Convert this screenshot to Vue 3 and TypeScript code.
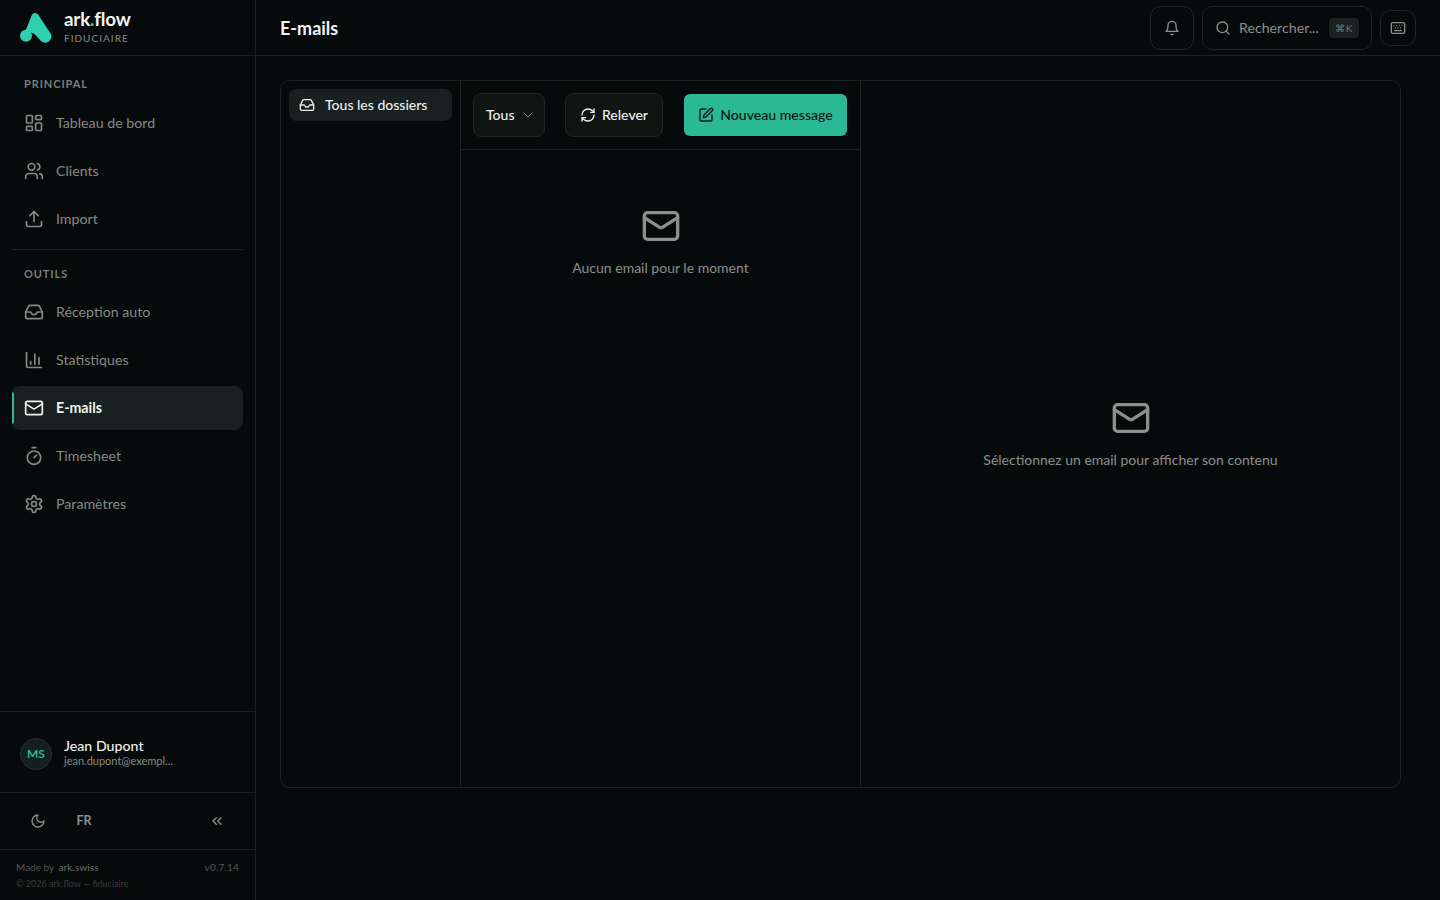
<script setup lang="ts">
import { h } from 'vue'

const circle = (x: number, y: number, r: number) =>
  `M${x - r} ${y}a${r} ${r} 0 1 0 ${2 * r} 0a${r} ${r} 0 1 0 ${-2 * r} 0z`
const rect = (x: number, y: number, w: number, he: number, r: number) =>
  `M${x + r} ${y}h${w - 2 * r}a${r} ${r} 0 0 1 ${r} ${r}v${he - 2 * r}a${r} ${r} 0 0 1 ${-r} ${r}h${-(w - 2 * r)}a${r} ${r} 0 0 1 ${-r} ${-r}v${-(he - 2 * r)}a${r} ${r} 0 0 1 ${r} ${-r}z`

const icons: Record<string, string[]> = {
  dashboard: [rect(3, 3, 7, 9, 1), rect(14, 3, 7, 5, 1), rect(14, 12, 7, 9, 1), rect(3, 16, 7, 5, 1)],
  users: ['M16 21v-2a4 4 0 0 0-4-4H6a4 4 0 0 0-4 4v2', circle(9, 7, 4), 'M22 21v-2a4 4 0 0 0-3-3.87', 'M16 3.13a4 4 0 0 1 0 7.75'],
  upload: ['M21 15v4a2 2 0 0 1-2 2H5a2 2 0 0 1-2-2v-4', 'm17 8-5-5-5 5', 'M12 3v12'],
  inbox: ['M22 12h-6l-2 3h-4l-2-3H2', 'M5.45 5.11 2 12v6a2 2 0 0 0 2 2h16a2 2 0 0 0 2-2v-6l-3.45-6.89A2 2 0 0 0 16.76 4H7.24a2 2 0 0 0-1.79 1.11z'],
  chart: ['M3 3v16a2 2 0 0 0 2 2h16', 'M8 17v-3', 'M13 17V5', 'M18 17V9'],
  mail: [rect(2, 4, 20, 16, 2), 'm22 7-8.97 5.7a1.94 1.94 0 0 1-2.06 0L2 7'],
  timer: ['M10 2h4', 'm12 14 3-3', circle(12, 14, 8)],
  settings: ['M12.22 2h-.44a2 2 0 0 0-2 2v.18a2 2 0 0 1-1 1.73l-.43.25a2 2 0 0 1-2 0l-.15-.08a2 2 0 0 0-2.73.73l-.22.38a2 2 0 0 0 .73 2.73l.15.1a2 2 0 0 1 1 1.72v.51a2 2 0 0 1-1 1.74l-.15.09a2 2 0 0 0-.73 2.73l.22.38a2 2 0 0 0 2.73.73l.15-.08a2 2 0 0 1 2 0l.43.25a2 2 0 0 1 1 1.73V20a2 2 0 0 0 2 2h.44a2 2 0 0 0 2-2v-.18a2 2 0 0 1 1-1.73l.43-.25a2 2 0 0 1 2 0l.15.08a2 2 0 0 0 2.73-.73l.22-.39a2 2 0 0 0-.73-2.73l-.15-.08a2 2 0 0 1-1-1.74v-.5a2 2 0 0 1 1-1.74l.15-.09a2 2 0 0 0 .73-2.73l-.22-.38a2 2 0 0 0-2.73-.73l-.15.08a2 2 0 0 1-2 0l-.43-.25a2 2 0 0 1-1-1.73V4a2 2 0 0 0-2-2z', circle(12, 12, 3)],
  moon: ['M12 3a6 6 0 0 0 9 9 9 9 0 1 1-9-9Z'],
  chevrons: ['m11 17-5-5 5-5', 'm18 17-5-5 5-5'],
  bell: ['M6 8a6 6 0 0 1 12 0c0 7 3 9 3 9H3s3-2 3-9', 'M10.3 21a1.94 1.94 0 0 0 3.4 0'],
  search: [circle(11, 11, 8), 'm21 21-4.3-4.3'],
  keyboard: ['M10 8h.01', 'M12 12h.01', 'M14 8h.01', 'M16 12h.01', 'M18 8h.01', 'M6 8h.01', 'M7 16h10', 'M8 12h.01', rect(2, 4, 20, 16, 2)],
  refresh: ['M3 12a9 9 0 0 1 9-9 9.75 9.75 0 0 1 6.74 2.74L21 8', 'M21 3v5h-5', 'M21 12a9 9 0 0 1-9 9 9.75 9.75 0 0 1-6.74-2.74L3 16', 'M8 16H3v5'],
  pen: ['M12 3H5a2 2 0 0 0-2 2v14a2 2 0 0 0 2 2h14a2 2 0 0 0 2-2v-7', 'M18.375 2.625a1 1 0 0 1 3 3l-9.013 9.014a2 2 0 0 1-.853.505l-2.873.84a.5.5 0 0 1-.62-.62l.84-2.873a2 2 0 0 1 .506-.852z'],
  chevron: ['m6 9 6 6 6-6'],
}

const Icon = (props: { name: string; size?: number; sw?: number }) =>
  h(
    'svg',
    {
      width: props.size ?? 20,
      height: props.size ?? 20,
      viewBox: '0 0 24 24',
      fill: 'none',
      stroke: 'currentColor',
      'stroke-width': props.sw ?? 2,
      'stroke-linecap': 'round',
      'stroke-linejoin': 'round',
      style: 'flex:none;display:block',
    },
    icons[props.name].map((d) => h('path', { d })),
  )
Icon.props = ['name', 'size', 'sw']

const mainNav = [
  { label: 'Tableau de bord', icon: 'dashboard' },
  { label: 'Clients', icon: 'users' },
  { label: 'Import', icon: 'upload' },
]
const toolNav = [
  { label: 'Réception auto', icon: 'inbox', active: false },
  { label: 'Statistiques', icon: 'chart', active: false },
  { label: 'E-mails', icon: 'mail', active: true },
  { label: 'Timesheet', icon: 'timer', active: false },
  { label: 'Paramètres', icon: 'settings', active: false },
]
</script>

<template>
  <div class="app">
    <aside class="sidebar">
      <div class="brand">
        <svg class="logo" width="32" height="30" viewBox="0 0 32 30">
          <path d="M12 1.8C13.4-.5 16.7-.5 18.2 1.8L30.8 20.8A6.2 6.2 0 0 1 21 28L14.5 21C13 19.6 10 19.5 8 19L5.5 17.5z" fill="#2fd0b0"/>
          <circle cx="6" cy="22.8" r="6" fill="#2fd0b0"/>
        </svg>
        <div class="brand-text">
          <div class="brand-name">ark<span class="dot">.</span>flow</div>
          <div class="brand-sub">FIDUCIAIRE</div>
        </div>
      </div>

      <nav class="nav">
        <div class="nav-label">PRINCIPAL</div>
        <div class="nav-list">
          <a v-for="item in mainNav" :key="item.label" class="nav-item">
            <Icon :name="item.icon" />
            <span class="t">{{ item.label }}</span>
          </a>
        </div>
        <div class="nav-sep"></div>
        <div class="nav-label second">OUTILS</div>
        <div class="nav-list">
          <a v-for="item in toolNav" :key="item.label" class="nav-item" :class="{ active: item.active }">
            <Icon :name="item.icon" />
            <span class="t">{{ item.label }}</span>
          </a>
        </div>
      </nav>

      <div class="user">
        <div class="avatar"><span class="t">MS</span></div>
        <div>
          <div class="user-name">Jean Dupont</div>
          <div class="user-mail">jean.dupont@exempl...</div>
        </div>
      </div>

      <div class="controls">
        <div class="controls-left">
          <button class="ctl"><Icon name="moon" :size="16" /></button>
          <button class="ctl lang"><span class="t">FR</span></button>
        </div>
        <button class="ctl"><Icon name="chevrons" :size="16" /></button>
      </div>

      <div class="foot">
        <div class="foot-row">
          <span>Made by <b>ark.swiss</b></span>
          <span class="version">v0.7.14</span>
        </div>
        <div class="copy">© 2026 ark.flow — fiduciaire</div>
      </div>
    </aside>

    <div class="content">
      <header class="topbar">
        <h1>E-mails</h1>
        <div class="top-actions">
          <button class="top-btn bell"><Icon name="bell" :size="16" /></button>
          <div class="search">
            <Icon name="search" :size="16" />
            <span class="search-text">Rechercher...</span>
            <kbd>⌘K</kbd>
          </div>
          <button class="top-btn kb"><Icon name="keyboard" :size="16" /></button>
        </div>
      </header>

      <main class="main">
        <section class="panel">
          <div class="folders">
            <div class="folder">
              <Icon name="inbox" :size="16" />
              <span class="t">Tous les dossiers</span>
            </div>
          </div>
          <div class="list">
            <div class="toolbar">
              <button class="tool select"><span class="t">Tous</span><span class="chev"><Icon name="chevron" :size="16" :sw="1.5" /></span></button>
              <button class="tool refresh"><Icon name="refresh" :size="16" /><span class="t">Relever</span></button>
              <button class="primary"><Icon name="pen" :size="16" /><span class="t">Nouveau message</span></button>
            </div>
            <div class="list-empty">
              <Icon name="mail" :size="40" />
              <p>Aucun email pour le moment</p>
            </div>
          </div>
          <div class="detail">
            <Icon name="mail" :size="40" />
            <p>Sélectionnez un email pour afficher son contenu</p>
          </div>
        </section>
      </main>
    </div>
  </div>
</template>

<style>
html, body { margin: 0; background: #070a0a; }
</style>

<style scoped>
.app {
  display: flex;
  height: 900px;
  overflow: hidden;
  background: #070a0a;
  color: #8b8f8e;
  font-family: "Lato", "Noto Sans", sans-serif;
  font-size: 14px;
}
button { font-family: inherit; cursor: pointer; }
.t { padding-bottom: 2px; }

.sidebar {
  width: 255px;
  flex: none;
  border-right: 1px solid #1d2321;
  display: flex;
  flex-direction: column;
}
.brand {
  height: 55px;
  flex: none;
  border-bottom: 1px solid #1d2321;
  display: flex;
  align-items: center;
  gap: 12px;
  padding-left: 20px;
}
.logo { flex: none; margin-top: 1px; }
.brand-text { padding-bottom: 2px; }
.brand-name { color: #f2f4f3; font-size: 18.8px; font-weight: 700; line-height: 20px; letter-spacing: -0.2px; }
.dot { color: #2fd0b0; }
.brand-sub { color: #7d8280; font-size: 10px; letter-spacing: 1px; line-height: 14px; margin-top: 2px; font-weight: 500; }

.nav { flex: 1; padding: 20px 12px 0; min-height: 0; }
.nav-label { color: #787d7b; font-size: 11px; font-weight: 700; letter-spacing: 0.9px; line-height: 16px; padding-left: 12px; margin-bottom: 9px; }
.nav-label.second { margin-bottom: 8px; }
.nav-list { display: flex; flex-direction: column; gap: 4px; }
.nav-item {
  position: relative;
  height: 44px;
  display: flex;
  align-items: center;
  gap: 12px;
  padding-left: 12px;
  border-radius: 8px;
  color: #858a88;
  font-size: 14.2px;
  box-sizing: border-box;
}
.nav-item.active {
  background: #18211f;
  color: #f2f4f3;
  font-weight: 700;
}
.nav-item.active::before {
  content: "";
  position: absolute;
  left: 0;
  top: 6px;
  bottom: 6px;
  width: 2px;
  background: #2bb894;
  border-radius: 0 2px 2px 0;
}
.nav-sep { height: 1px; background: #1d2321; margin: 8px 0 16px; }

.user {
  height: 80px;
  flex: none;
  border-top: 1px solid #1d2321;
  display: flex;
  align-items: center;
  gap: 12px;
  padding-left: 20px;
}
.avatar {
  width: 30px;
  height: 30px;
  margin-top: 4px;
  border-radius: 50%;
  background: #14201d;
  border: 1px solid #25332f;
  color: #2bb894;
  font-size: 12px;
  font-weight: 700;
  display: flex;
  align-items: center;
  justify-content: center;
  flex: none;
}
.user-name { color: #eef0ef; font-size: 14.2px; line-height: 17px; font-weight: 500; }
.user-mail { color: #858a88; font-size: 11px; line-height: 14px; }

.controls {
  height: 56px;
  flex: none;
  border-top: 1px solid #1d2321;
  display: flex;
  align-items: center;
  justify-content: space-between;
  padding: 0 16px;
}
.controls-left { display: flex; align-items: center; gap: 8px; }
.ctl {
  width: 44px;
  height: 32px;
  background: transparent;
  border: 0;
  padding: 0;
  color: #8b8f8e;
  display: flex;
  align-items: center;
  justify-content: center;
}
.lang { width: 32px; font-size: 12.5px; font-weight: 700; }
.foot {
  height: 51px;
  flex: none;
  border-top: 1px solid #1d2321;
  padding: 10px 16px 0;
  box-sizing: border-box;
  font-size: 10px;
}
.foot-row { display: flex; justify-content: space-between; color: #515655; line-height: 15px; }
.foot-row b { color: #6a6f6d; font-weight: 400; margin-left: 2px; letter-spacing: 0.1px; }
.version { letter-spacing: 0.2px; }
.copy { color: #393e3d; font-size: 9px; line-height: 15px; margin-top: 1px; }

.content { flex: 1; min-width: 0; display: flex; flex-direction: column; }
.topbar {
  height: 55px;
  flex: none;
  border-bottom: 1px solid #1d2321;
  display: flex;
  align-items: center;
  justify-content: space-between;
  padding: 0 24px;
}
h1 { margin: 0; color: #f2f4f3; font-size: 18px; font-weight: 700; }
.top-actions { display: flex; align-items: center; gap: 8px; }
.top-btn {
  background: transparent;
  border: 1px solid #1f2624;
  border-radius: 10px;
  color: #8b8f8e;
  padding: 0;
  display: flex;
  align-items: center;
  justify-content: center;
  box-sizing: border-box;
}
.bell { width: 44px; height: 44px; }
.kb { width: 36px; height: 36px; }
.search {
  width: 170px;
  height: 44px;
  border: 1px solid #1f2624;
  border-radius: 10px;
  box-sizing: border-box;
  display: flex;
  align-items: center;
  gap: 8px;
  padding: 0 12px;
  color: #8b8f8e;
}
.search-text { font-size: 14.2px; flex: 1; white-space: nowrap; }
kbd {
  width: 30px;
  height: 20px;
  border-radius: 4px;
  background: #1a2321;
  color: #747977;
  font-family: inherit;
  font-size: 10px;
  letter-spacing: 0.4px;
  display: flex;
  align-items: center;
  justify-content: center;
}

.main { flex: 1; min-height: 0; padding: 24px 39px 0 24px; }
.panel {
  height: 708px;
  border: 1px solid #1d2321;
  border-radius: 10px;
  display: flex;
  box-sizing: border-box;
}
.folders { width: 180px; flex: none; border-right: 1px solid #1d2321; padding: 8px; box-sizing: border-box; }
.folder {
  height: 32px;
  background: #18211f;
  border-radius: 8px;
  display: flex;
  align-items: center;
  gap: 10px;
  padding-left: 10px;
  color: #eef0ef;
  font-size: 14px;
  font-weight: 500;
}
.list { width: 400px; flex: none; border-right: 1px solid #1d2321; box-sizing: border-box; display: flex; flex-direction: column; }
.toolbar {
  height: 69px;
  flex: none;
  border-bottom: 1px solid #1d2321;
  box-sizing: border-box;
  display: flex;
  align-items: center;
  gap: 20px;
  padding: 0 13px 0 12px;
}
.tool {
  height: 44px;
  background: #101514;
  border: 1px solid #1f2624;
  border-radius: 8px;
  color: #eef0ef;
  font-size: 14px;
  font-weight: 500;
  display: flex;
  align-items: center;
  box-sizing: border-box;
  padding: 0;
}
.select { width: 72px; padding-left: 12px; gap: 6px; }
.chev { color: #8b8f8e; display: flex; }
.refresh { width: 98px; justify-content: center; gap: 6px; }
.primary {
  width: 163px;
  height: 42px;
  margin-left: auto;
  background: #2bb894;
  border: 0;
  border-radius: 6px;
  color: #0a1412;
  font-size: 14.1px;
  font-weight: 500;
  display: flex;
  align-items: center;
  justify-content: center;
  gap: 6px;
  padding: 0;
}
.list-empty { display: flex; flex-direction: column; align-items: center; padding-top: 56px; color: #8b8f8e; }
.list-empty p, .detail p { margin: 12px 0 0; font-size: 14px; line-height: 20px; }
.detail {
  flex: 1;
  display: flex;
  flex-direction: column;
  align-items: center;
  justify-content: center;
  color: #8b8f8e;
}
</style>
